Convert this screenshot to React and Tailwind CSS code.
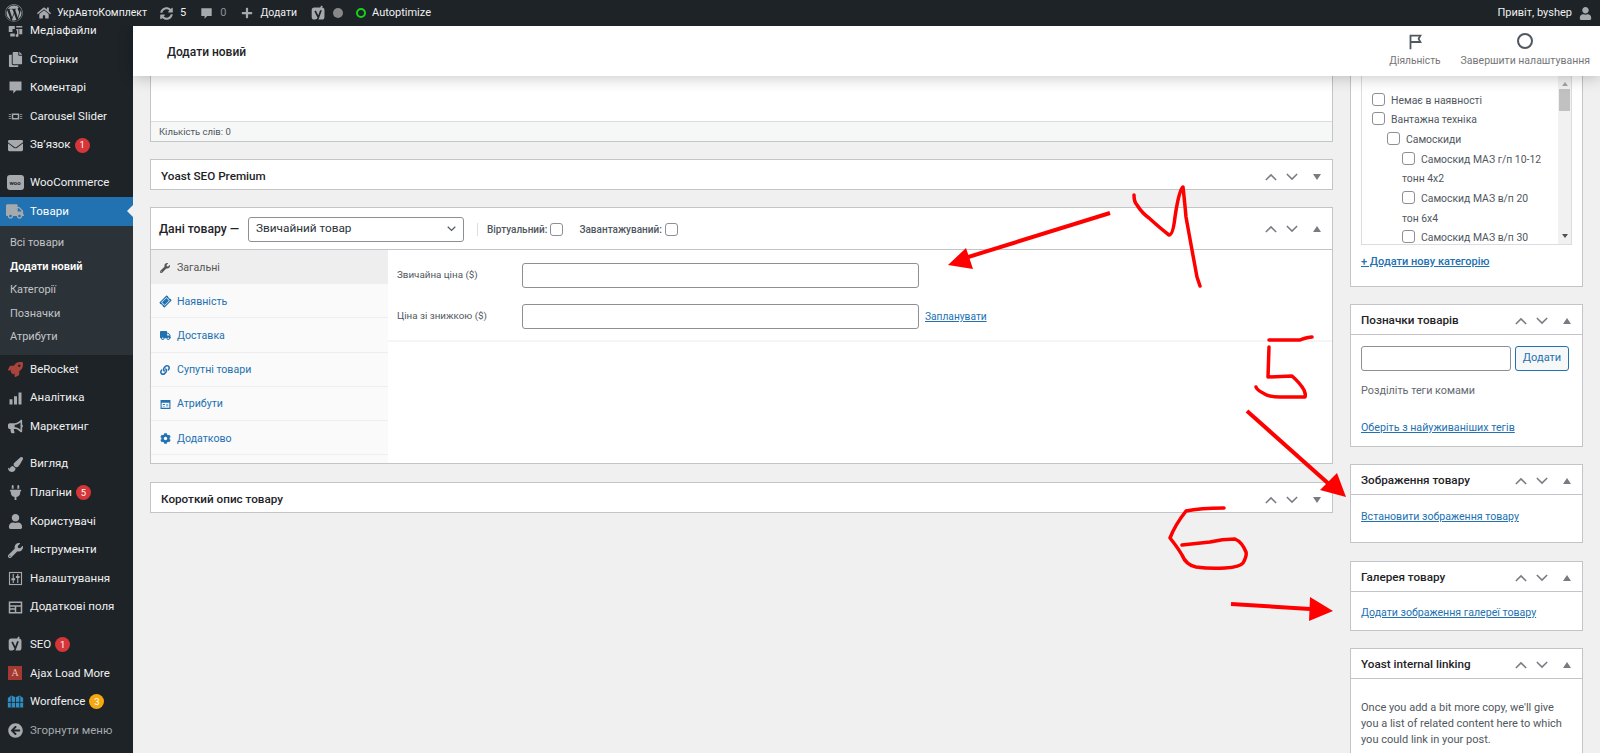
import React from 'react';
import {
  FaWordpress, FaHome, FaSyncAlt, FaPlus, FaCopy, FaEnvelope, FaTruck, FaRocket, FaBullhorn,
  FaPaintBrush, FaPlug, FaUser, FaWrench, FaArrowCircleLeft, FaLink, FaCog,
  FaTicketAlt,
} from 'react-icons/fa';

const Bubble = ({ className }) => (
  <svg viewBox="0 0 20 20" className={className} fill="currentColor">
    <path d="M2 2h16v12h-7l-4 4v-4H2z" />
  </svg>
);

const YoastMark = ({ className }) => (
  <svg viewBox="0 0 20 20" className={className}>
    <rect x="2" y="3" width="15" height="14" rx="3" fill="currentColor" />
    <path d="M6 7l3.500 7M13 6l-4 11-2 1" fill="none" stroke="#1d2327" strokeWidth="2" />
    <path d="M14 1l-2 5" stroke="currentColor" strokeWidth="2" />
  </svg>
);

const Bars = ({ className }) => (
  <svg viewBox="0 0 20 20" className={className} fill="currentColor">
    <path d="M2 11h4v7H2zM8 7h4v11H8zM14 2h4v16h-4z" />
  </svg>
);

const Carousel = ({ className }) => (
  <svg viewBox="0 0 20 20" className={className} fill="currentColor">
    <path d="M5 6h10v8H5zM7 8v4h6V8zM1 7h3v1H1zM1 9.500h3v1H1zM1 12h3v1H1zM16 7h3v1h-3zM16 9.500h3v1h-3zM16 12h3v1h-3z" fillRule="evenodd" />
  </svg>
);

const Media = ({ className }) => (
  <svg viewBox="0 0 20 20" className={className} fill="currentColor">
    <path d="M1 3h8v5H6v4H1zM11 3h8v3h-8zM3 14h6v4H3zM11 8h3v8.500a2 2 0 1 1-2-1.900V10h-1zM15 8h4v7h-4z" />
  </svg>
);

const Sliders = ({ className }) => (
  <svg viewBox="0 0 20 20" className={className} fill="none" stroke="currentColor">
    <rect x="2" y="2" width="16" height="16" strokeWidth="1.500" />
    <path d="M7 4v12M13 4v12" strokeWidth="1.500" />
    <path d="M4.500 11h5M10.500 8h5" strokeWidth="2.500" />
  </svg>
);

const Fields = ({ className }) => (
  <svg viewBox="0 0 20 20" className={className} fill="currentColor">
    <path fillRule="evenodd" d="M1 2h18v16H1zM3 4v3h14V4zM3 9v2h6V9zM11 9v7h6V9zM3 13v3h6v-3z" />
  </svg>
);

const Attributes = ({ className }) => (
  <svg viewBox="0 0 20 20" className={className} fill="currentColor">
    <path fillRule="evenodd" d="M1 2h18v16H1zM3 7v9h14V7zM5 9h4v2H5zM11 9h4v1h-4zM11 12h4v1h-4zM5 13h4v1H5z" />
  </svg>
);

const Woo = () => (
  <span className="relative flex h-[15px] w-[17px] items-center justify-center rounded-[3px] bg-[#a7aaad] text-[6px] font-bold leading-none text-[#1d2327]">
    woo
  </span>
);

const AjaxMark = () => (
  <span className="flex h-[14px] w-[14px] items-center justify-center bg-[#a33a32] font-['Liberation_Serif',serif] text-[10px] leading-none text-[#e8b9b3]">
    A
  </span>
);

const Fence = ({ className }) => (
  <svg viewBox="0 0 20 20" className={className}>
    <path d="M1 6l4-3 5 2 5-2 4 3v11H1z" fill="#2f8fc4" />
    <path d="M5 4v13M10 5v12M15 4v13M1 11h18" stroke="#1d2327" strokeWidth="1" fill="none" />
  </svg>
);

const ic = 'h-[15px] w-[15px]';

const groups = [
  [
    { icon: <Media className={ic} />, label: 'Медіафайли' },
    { icon: <FaCopy className={ic} />, label: 'Сторінки' },
    { icon: <Bubble className={ic} />, label: 'Коментарі' },
    { icon: <Carousel className={ic} />, label: 'Carousel Slider' },
    { icon: <FaEnvelope className={ic} />, label: 'Зв’язок', badge: '1' },
  ],
  [
    { icon: <Woo />, label: 'WooCommerce' },
    { icon: <FaTruck className="h-[17px] w-[18px]" />, label: 'Товари', active: true },
    { sub: ['Всі товари', 'Додати новий', 'Категорії', 'Позначки', 'Атрибути'] },
    { icon: <FaRocket className={`${ic} text-[#a8443c]`} />, label: 'BeRocket' },
    { icon: <Bars className={ic} />, label: 'Аналітика' },
    { icon: <FaBullhorn className={ic} />, label: 'Маркетинг' },
  ],
  [
    { icon: <FaPaintBrush className={ic} />, label: 'Вигляд' },
    { icon: <FaPlug className={ic} />, label: 'Плагіни', badge: '5' },
    { icon: <FaUser className={ic} />, label: 'Користувачі' },
    { icon: <FaWrench className={ic} />, label: 'Інструменти' },
    { icon: <Sliders className={ic} />, label: 'Налаштування' },
    { icon: <Fields className={ic} />, label: 'Додаткові поля' },
  ],
  [
    { icon: <YoastMark className="h-[17px] w-[17px]" />, label: 'SEO', badge: '1' },
    { icon: <AjaxMark />, label: 'Ajax Load More' },
    { icon: <Fence className="h-[17px] w-[17px]" />, label: 'Wordfence', badge: '3', amber: true },
    { icon: <FaArrowCircleLeft className={ic} />, label: 'Згорнути меню', muted: true },
  ],
];

const MenuItem = ({ item }) => {
  if (item.sub) {
    return (
      <ul className="bg-[#2c3338] py-[6px]">
        {item.sub.map((s) => (
          <li
            key={s}
            className={`flex h-[23.500px] items-center pl-[10px] text-[11px] ${s === 'Додати новий' ? 'font-semibold text-white' : 'text-[#c3c4c7]'}`}
          >
            {s}
          </li>
        ))}
      </ul>
    );
  }
  return (
    <div className={`relative flex h-[28.600px] items-center ${item.active ? 'bg-[#2271b1] text-white' : item.muted ? 'text-[#a7aaad]' : 'text-[#f0f0f1]'}`}>
      <span className="flex w-[30px] shrink-0 items-center justify-center text-[#a7aaad]">{item.icon}</span>
      <span className="text-[11.500px] leading-none">{item.label}</span>
      {item.badge && (
        <span className={`ml-[4px] flex h-[15px] w-[15px] items-center justify-center rounded-full text-[9.500px] text-white ${item.amber ? 'bg-[#f5a90f]' : 'bg-[#d63638]'}`}>
          {item.badge}
        </span>
      )}
      {item.active && <span className="absolute right-0 top-[8px] h-0 w-0 border-y-[6px] border-r-[6px] border-y-transparent border-r-[#f0f0f1]" />}
    </div>
  );
};

const Sidebar = () => (
  <aside className="-mt-[9.500px] w-[133px] shrink-0 bg-[#1d2327]">
    <div className="flex flex-col gap-[9px]">
      {groups.map((g, i) => (
        <div key={i}>
          {g.map((item, j) => <MenuItem key={j} item={item} />)}
        </div>
      ))}
    </div>
  </aside>
);

const TopBar = () => (
  <header className="relative z-20 flex h-[26px] shrink-0 items-center bg-[#1d2327] text-[10.500px] text-[#f0f0f1]">
    <FaWordpress className="ml-[5px] h-[18px] w-[18px] text-[#a7aaad]" />
    <FaHome className="ml-[14px] h-[14px] w-[14px] text-[#a7aaad]" />
    <span className="ml-[6px]">УкрАвтоКомплект</span>
    <FaSyncAlt className="ml-[13px] h-[13px] w-[13px] text-[#a7aaad]" />
    <span className="ml-[7px] text-[11px]">5</span>
    <Bubble className="ml-[14px] h-[13px] w-[13px] text-[#a7aaad]" />
    <span className="ml-[7px] text-[11px] text-[#8c8f94]">0</span>
    <FaPlus className="ml-[15px] h-[12px] w-[12px] text-[#a7aaad]" />
    <span className="ml-[7px]">Додати</span>
    <YoastMark className="ml-[13px] h-[17px] w-[17px] text-[#a7aaad]" />
    <span className="ml-[6px] h-[10px] w-[10px] rounded-full bg-[#888]" />
    <span className="ml-[13px] h-[10px] w-[10px] rounded-full border-[2.500px] border-[#19d319]" />
    <span className="ml-[6px] text-[11px]">Autoptimize</span>
    <span className="ml-auto text-[11px]">Привіт, byshep</span>
    <FaUser className="ml-[7px] mr-[8px] h-[13px] w-[13px] text-[#a7aaad]" />
  </header>
);

const PageHeader = () => (
  <div className="relative z-10 flex h-[50px] shrink-0 items-center justify-between bg-white pl-[34px] pr-[10px] shadow-[0_2px_14px_rgba(0,0,0,0.22)]">
    <span className="pt-[1px] text-[12px] font-medium text-[#1d2327]">Додати новий</span>
    <div className="flex gap-[20px] text-[10.500px] text-[#757575]">
      <div className="flex flex-col items-center">
        <svg viewBox="0 0 20 20" className="h-[18px] w-[18px]" fill="none" stroke="#50575e" strokeWidth="2">
          <path d="M5 18V3h11l-2 3.500 2 3.500H5" />
        </svg>
        <span className="mt-[2px] text-[10.200px]">Діяльність</span>
      </div>
      <div className="flex flex-col items-center">
        <span className="h-[16px] w-[16px] rounded-full border-2 border-[#50575e]" />
        <span className="mt-[4px]">Завершити налаштування</span>
      </div>
    </div>
  </div>
);

const BoxControls = ({ open = true }) => (
  <div className="flex items-center text-[#787c82]">
    <svg viewBox="0 0 14 9" className="h-[8px] w-[12px]" fill="none" stroke="currentColor" strokeWidth="1.800"><path d="M1 8l6-6 6 6" /></svg>
    <svg viewBox="0 0 14 9" className="ml-[9px] h-[8px] w-[12px]" fill="none" stroke="currentColor" strokeWidth="1.800"><path d="M1 1l6 6 6-6" /></svg>
    <span className={`ml-[15px] h-0 w-0 border-x-[4px] border-x-transparent ${open ? 'border-b-[6px] border-b-[#787c82]' : 'border-t-[6px] border-t-[#787c82]'}`} />
  </div>
);

const Box = ({ title, open, children, className = '' }) => (
  <section className={`border border-[#c3c4c7] bg-white ${className}`}>
    <div className={`flex items-center justify-between pl-[10px] pr-[11px] ${children ? 'h-[30px] border-b border-[#c3c4c7] pt-[2px]' : 'h-[29px] pt-[4px]'}`}>
      <h2 className="text-[11.700px] font-medium text-[#1d2327]">{title}</h2>
      <BoxControls open={open} />
    </div>
    {children}
  </section>
);

const Check = ({ className = '' }) => (
  <span className={`inline-block h-[13px] w-[13px] shrink-0 rounded-[3px] border border-[#8c8f94] bg-white align-[-2px] ${className}`} />
);

const tabs = [
  { icon: <FaWrench className="h-[10px] w-[10px]" />, label: 'Загальні', active: true },
  { icon: <FaTicketAlt className="h-[11px] w-[11px] -rotate-45" />, label: 'Наявність' },
  { icon: <FaTruck className="h-[11px] w-[11px]" />, label: 'Доставка' },
  { icon: <FaLink className="h-[10px] w-[10px]" />, label: 'Супутні товари' },
  { icon: <Attributes className="h-[11px] w-[11px]" />, label: 'Атрибути' },
  { icon: <FaCog className="h-[11px] w-[11px]" />, label: 'Додатково' },
];

const ProductData = () => (
  <section className="h-[257px] shrink-0 border border-[#c3c4c7] bg-white">
    <div className="flex h-[42px] items-center border-b border-[#c3c4c7] pl-[8px] pr-[11px] pt-[1px]">
      <span className="w-[89px] shrink-0 text-[12.200px] font-medium text-[#1d2327]">Дані товару —</span>
      <div className="flex h-[25px] w-[216px] items-center justify-between rounded-[3px] border border-[#8c8f94] pl-[7px] pr-[7px] text-[11.800px] text-[#2c3338]">
        Звичайний товар
        <svg viewBox="0 0 12 8" className="h-[6px] w-[9px]" fill="none" stroke="#50575e" strokeWidth="1.600"><path d="M1 1l5 5 5-5" /></svg>
      </div>
      <span className="ml-[13px] h-[13px] w-px bg-[#ddd]" />
      <span className="ml-[9px] text-[10px] font-medium text-[#50575e]">Віртуальний:</span>
      <Check className="ml-[3px]" />
      <span className="ml-[16px] text-[10px] font-medium text-[#50575e]">Завантажуваний:</span>
      <Check className="ml-[3px]" />
      <div className="ml-auto"><BoxControls /></div>
    </div>
    <div className="flex h-[213px]">
      <ul className="w-[237px] shrink-0 bg-[#fafafa]">
        {tabs.map((t) => (
          <li
            key={t.label}
            className={`flex h-[34.200px] items-center border-b border-[#eee] pt-[2px] text-[10.600px] ${t.active ? 'bg-[#eee] text-[#555]' : 'text-[#2271b1]'}`}
          >
            <span className="flex w-[26px] shrink-0 justify-center pl-[2px]">{t.icon}</span>
            {t.label}
          </li>
        ))}
      </ul>
      <div className="flex-1">
        <div className="flex h-[92px] flex-col gap-[16px] border-b-2 border-[#f5f5f5] pl-[9px] pt-[13px] text-[9.800px] text-[#50575e]">
          <div className="flex items-center">
            <span className="w-[125px]">Звичайна ціна ($)</span>
            <span className="h-[25px] w-[397px] rounded-[3px] border border-[#8c8f94] bg-white" />
          </div>
          <div className="flex items-center">
            <span className="w-[125px]">Ціна зі знижкою ($)</span>
            <span className="h-[25px] w-[397px] rounded-[3px] border border-[#8c8f94] bg-white" />
            <a className="ml-[6px] text-[10.200px] text-[#2271b1] underline">Запланувати</a>
          </div>
        </div>
      </div>
    </div>
  </section>
);

const LeftColumn = () => (
  <div className="flex min-w-0 flex-1 flex-col">
    <section className="h-[66px] shrink-0 border-x border-b border-[#c3c4c7] bg-white">
      <div className="h-[45px]" />
      <div className="flex h-[20px] items-center border-t border-[#dcdcde] bg-[#f6f7f7] pl-[8px] pt-[2px] text-[9.500px] text-[#50575e]">Кількість слів: 0</div>
    </section>
    <Box title="Yoast SEO Premium" open={false} className="mt-[17px]" />
    <div className="mt-[17px]"><ProductData /></div>
    <Box title="Короткий опис товару" open={false} className="mt-[18px]" />
  </div>
);

const catRows = [
  { pad: 'pl-[10px]', lines: ['Немає в наявності'] },
  { pad: 'pl-[10px]', lines: ['Вантажна техніка'] },
  { pad: 'pl-[25px]', lines: ['Самоскиди'] },
  { pad: 'pl-[40px]', lines: ['Самоскид МАЗ г/п 10-12', 'тонн 4х2'] },
  { pad: 'pl-[40px]', lines: ['Самоскид МАЗ в/п 20', 'тон 6х4'] },
  { pad: 'pl-[40px]', lines: ['Самоскид МАЗ в/п 30'] },
];

const RightColumn = () => (
  <div className="flex w-[233px] shrink-0 flex-col">
    <section className="h-[211px] shrink-0 border-x border-b border-[#c3c4c7] bg-white px-[10px]">
      <div className="relative h-[169px] overflow-hidden border-x border-b border-[#dcdcde] pt-[14.500px]">
        {catRows.map((r) => (
          <div key={r.lines[0]} className={`${r.pad} whitespace-nowrap text-[10.400px] leading-[19.700px] text-[#50575e]`}>
            <Check className="mr-[6px]" />
            {r.lines[0]}
            {r.lines[1] && <><br />{r.lines[1]}</>}
          </div>
        ))}
        <div className="absolute bottom-0 right-0 top-0 flex w-[13px] flex-col items-center bg-[#f1f1f1]">
          <span className="mt-[6px] h-0 w-0 border-x-[3.500px] border-b-[4px] border-x-transparent border-b-[#a3a3a3]" />
          <span className="mt-[3px] h-[22px] w-[11px] bg-[#c1c1c1]" />
          <span className="mt-auto mb-[6px] h-0 w-0 border-x-[3.500px] border-t-[4px] border-x-transparent border-t-[#505050]" />
        </div>
      </div>
      <a className="mt-[9px] block text-[11px] font-medium text-[#2271b1] underline">+ Додати нову категорію</a>
    </section>

    <Box title="Позначки товарів" className="mt-[17px] h-[143px] shrink-0">
      <div className="px-[10px] pt-[11px] text-[10.800px]">
        <div className="flex gap-[4px]">
          <span className="h-[25px] w-[150px] rounded-[3px] border border-[#8c8f94] bg-white" />
          <span className="flex h-[25px] w-[54px] items-center justify-center rounded-[3px] border border-[#2271b1] bg-[#f6f7f7] text-[11px] text-[#2271b1]">Додати</span>
        </div>
        <p className="mt-[12px] text-[#646970]">Розділіть теги комами</p>
        <a className="mt-[21px] block text-[10.700px] text-[#2271b1] underline">Оберіть з найуживаніших тегів</a>
      </div>
    </Box>

    <Box title="Зображення товару" className="mt-[17px] h-[79px] shrink-0">
      <a className="mt-[14px] block px-[10px] text-[10.600px] text-[#2271b1] underline">Встановити зображення товару</a>
    </Box>

    <Box title="Галерея товару" className="mt-[18px] h-[70px] shrink-0">
      <a className="mt-[13px] block px-[10px] text-[10.600px] text-[#2271b1] underline">Додати зображення галереї товару</a>
    </Box>

    <Box title="Yoast internal linking" className="mt-[17px] h-[140px] shrink-0">
      <p className="mt-[21px] pl-[10px] pr-[18px] text-[11px] leading-[16px] text-[#50575e]">
        Once you add a bit more copy, we'll give you a list of related content here to which you could link in your post.
      </p>
    </Box>
  </div>
);

// hand drawn marks on top of the screenshot
const Annotations = () => (
  <svg className="pointer-events-none absolute left-0 top-0 z-30 h-[753px] w-[1600px]" viewBox="0 0 1600 753" fill="none" stroke="#ff0000" strokeWidth="3.500" strokeLinecap="round" strokeLinejoin="round">
    <path d="M1110 213L965 258" strokeWidth="4" strokeLinecap="butt" />
    <path d="M948 265L966 248L973 269Z" fill="#ff0000" stroke="none" />
    <path d="M1134 195Q1134 202 1137 205Q1142 213 1149 218Q1160 228 1169 235Q1173 235 1175 217Q1179 190 1183 187Q1185 205 1186 217L1192 250L1197 277L1200 286" />
    <path d="M1312 337Q1304 338 1300 340L1269 340M1269 347L1268 377L1292 376Q1300 383 1304 390Q1306 395 1305 397L1280 397Q1268 397 1263 393Q1257 390 1256 387" />
    <path d="M1247 411L1330 485" strokeWidth="4" strokeLinecap="butt" />
    <path d="M1346 497L1320 490L1337 473Z" fill="#ff0000" stroke="none" />
    <path d="M1224 508Q1200 508 1186 511Q1175 525 1170 538Q1178 548 1182 555Q1186 565 1196 567Q1210 569 1225 568Q1240 567 1243 563Q1247 556 1246 552Q1242 542 1235 539Q1222 539 1210 542L1182 545" />
    <path d="M1231 604L1310 609" strokeWidth="4" strokeLinecap="butt" />
    <path d="M1310 597L1333 611L1309 621Z" fill="#ff0000" stroke="none" />
  </svg>
);

export default function App() {
  return (
    <div className="relative flex h-[753px] w-[1600px] flex-col overflow-hidden bg-[#f0f0f0] font-['Roboto','Liberation_Sans',sans-serif]">
      <TopBar />
      <div className="flex min-h-0 flex-1">
        <Sidebar />
        <main className="flex min-w-0 flex-1 flex-col">
          <PageHeader />
          <div className="flex gap-[17px] px-[17px]">
            <LeftColumn />
            <RightColumn />
          </div>
        </main>
      </div>
      <Annotations />
    </div>
  );
}
